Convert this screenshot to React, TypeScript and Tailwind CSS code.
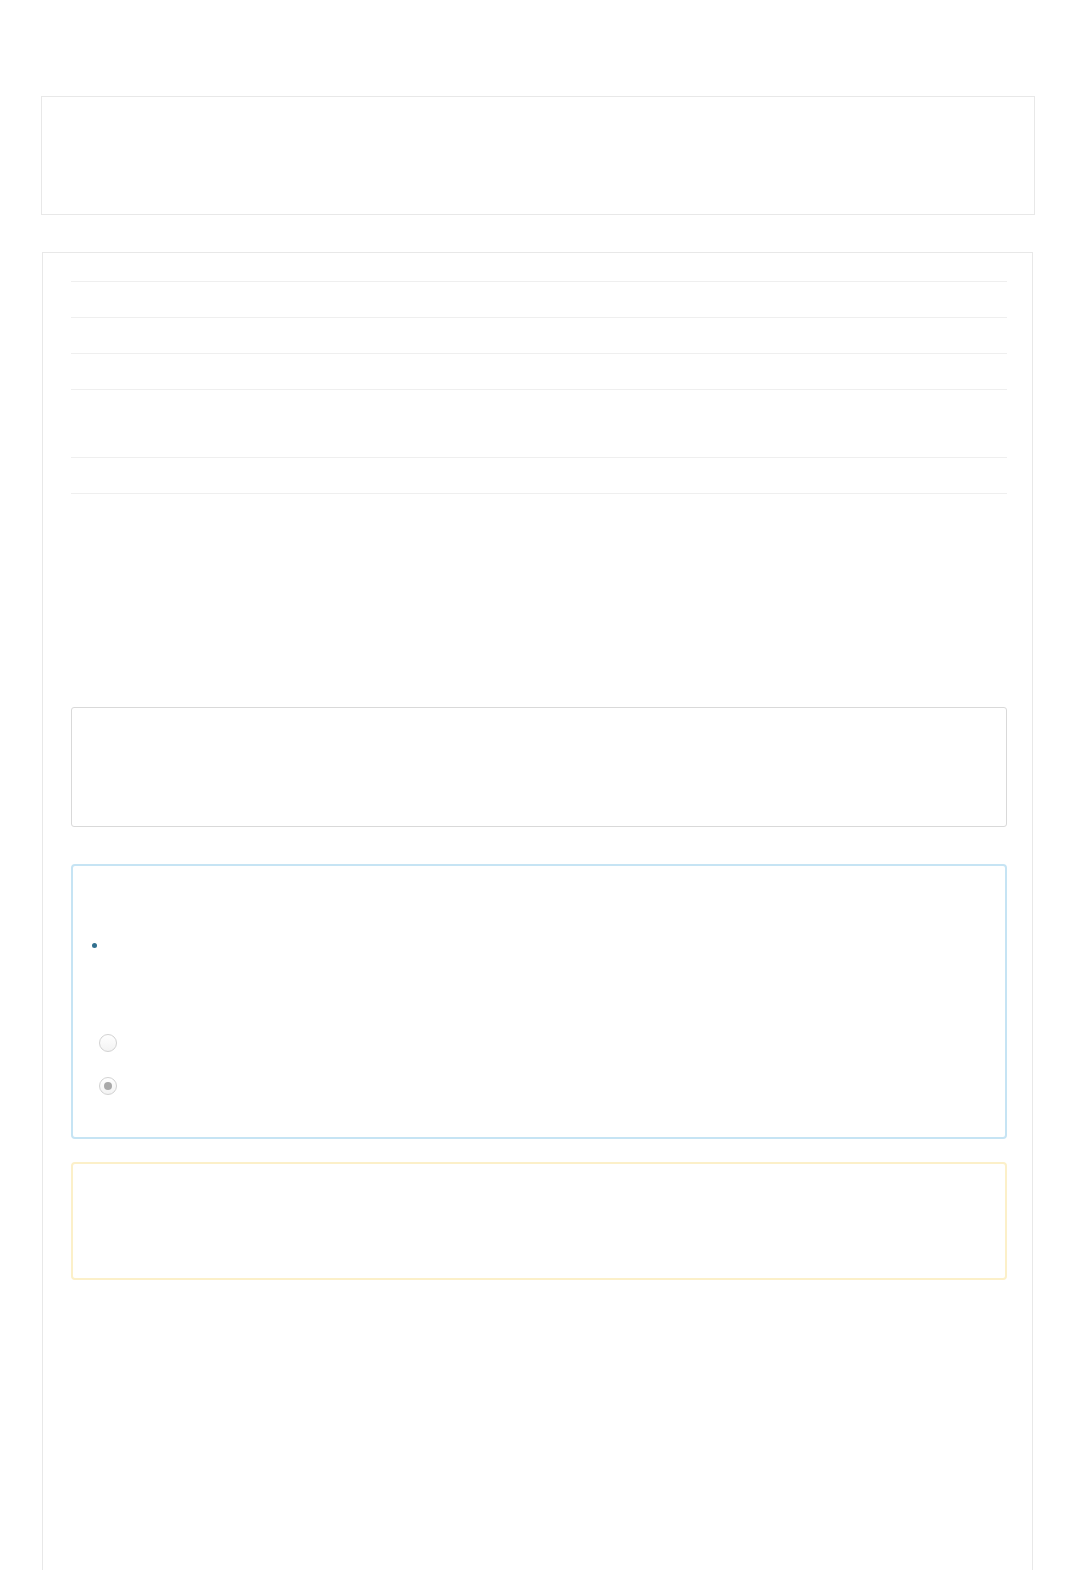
import React from 'react';

const Row = ({ h }: { h: string }) => <div className={`${h} border-b border-[#efefef]`} />;

const Radio = ({ checked }: { checked?: boolean }) => (
    <span className="flex h-[18px] w-[18px] items-center justify-center rounded-full border border-[#d2d2d2] bg-gradient-to-b from-white to-[#f3f3f3]">
        {checked && <span className="h-[8px] w-[8px] rounded-full bg-[#a9a9a9]" />}
    </span>
);

export default function App() {
    return (
        <div className="min-h-[1570px] bg-white pt-[96px] font-['Liberation_Sans',sans-serif]">
            {/* Header box */}
            <div className="ml-[41px] h-[119px] w-[994px] border border-[#e8e8e8]" />

            {/* Main panel */}
            <div className="ml-[42px] mt-[37px] h-[1400px] w-[991px] border border-[#e8e8e8] bg-white pl-[28px]">
                <div className="w-[936px]">
                    <Row h="h-[29px]" />
                    <Row h="h-[36px]" />
                    <Row h="h-[36px]" />
                    <Row h="h-[36px]" />
                    <Row h="h-[68px]" />
                    <Row h="h-[36px]" />

                    <div className="mt-[213px] h-[120px] rounded-[3px] border border-[#d9d9d9] bg-white" />

                    <div className="mt-[37px] h-[275px] rounded-[4px] border-2 border-[#c6e4f4] bg-white">
                        <div className="ml-[19px] mt-[77px] h-[5px] w-[5px] rounded-full bg-[#31708f]" />
                        <div className="ml-[26px] mt-[86px] flex flex-col gap-[25px]">
                            <Radio />
                            <Radio checked />
                        </div>
                    </div>

                    <div className="mt-[23px] h-[118px] rounded-[4px] border-2 border-[#fcf0c9] bg-white" />
                </div>
            </div>
        </div>
    );
}
